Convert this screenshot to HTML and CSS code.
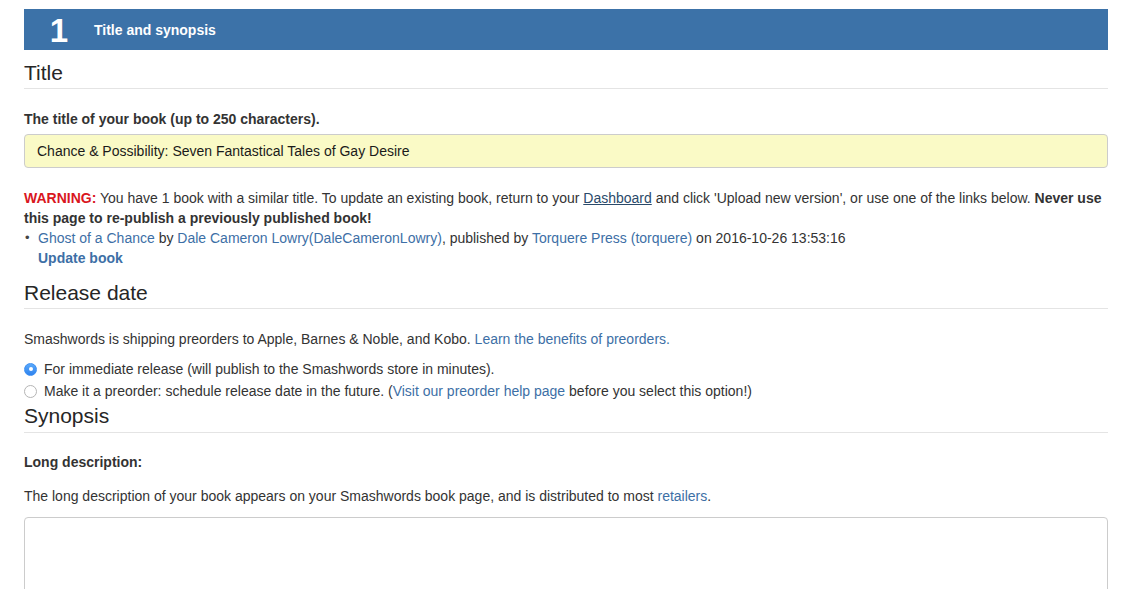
FILE: index.html
```html
<!DOCTYPE html>
<html>
<head>
<meta charset="utf-8">
<link rel="stylesheet" href="styles.css">
</head>
<body>
<div class="page">
  <div class="step-bar">
    <span class="step-num">1</span>
    <span class="step-title">Title and synopsis</span>
  </div>

  <h2 class="section-head">Title</h2>
  <div class="label">The title of your book (up to 250 characters).</div>
  <div class="text-input">Chance &amp; Possibility: Seven Fantastical Tales of Gay Desire</div>

  <div class="warning">
    <p><span class="warn-word">WARNING:</span> You have 1 book with a similar title. To update an existing book, return to your <a class="plain-link" href="#">Dashboard</a> and click 'Upload new version', or use one of the links below. <b>Never use this page to re-publish a previously published book!</b></p>
    <ul class="similar">
      <li><span class="bullet">•</span><div class="item"><div><a href="#">Ghost of a Chance</a> by <a href="#">Dale Cameron Lowry(DaleCameronLowry)</a>, published by <a href="#">Torquere Press (torquere)</a> on 2016-10-26 13:53:16</div><div><a class="strong-link" href="#">Update book</a></div></div></li>
    </ul>
  </div>

  <h2 class="section-head release">Release date</h2>
  <p class="para">Smashwords is shipping preorders to Apple, Barnes &amp; Noble, and Kobo. <a href="#">Learn the benefits of preorders.</a></p>
  <div class="radios">
    <div class="radio-row"><span class="radio checked"></span><span>For immediate release (will publish to the Smashwords store in minutes).</span></div>
    <div class="radio-row"><span class="radio"></span><span>Make it a preorder: schedule release date in the future. (<a href="#">Visit our preorder help page</a> before you select this option!)</span></div>
  </div>

  <h2 class="section-head synopsis">Synopsis</h2>
  <div class="label long">Long description:</div>
  <p class="para desc">The long description of your book appears on your Smashwords book page, and is distributed to most <a href="#">retailers</a>.</p>
  <div class="textarea"></div>
</div>
</body>
</html>
```

FILE: styles.css
```css
html, body {
  margin: 0;
  padding: 0;
  background: #fff;
  height: 100%;
  overflow: hidden;
}
body {
  font-family: "Liberation Sans", Arial, sans-serif;
  font-size: 14px;
  line-height: 20px;
  color: #333;
}
.page {
  width: 1084px;
  margin-left: 24px;
  padding-top: 9px;
}
a {
  color: #3d6fa6;
  text-decoration: none;
}
.step-bar {
  height: 41px;
  background: #3c72a8;
  display: flex;
  align-items: center;
  color: #fff;
}
.step-num {
  width: 70px;
  text-align: center;
  font-size: 33px;
  font-weight: bold;
  line-height: 41px;
  padding-top: 1px;
}
.step-title {
  font-weight: bold;
  font-size: 14px;
}
.section-head {
  margin: 11px 0 0;
  padding-bottom: 3px;
  font-size: 21px;
  line-height: 24px;
  font-weight: normal;
  color: #262626;
  border-bottom: 1px solid #e4e4e4;
}
.label {
  margin-top: 20px;
  font-weight: bold;
}
.text-input {
  margin-top: 5px;
  height: 32px;
  line-height: 32px;
  border: 1px solid #ccc;
  border-radius: 4px;
  background: #fafac6;
  padding-left: 12px;
  color: #1a1a1a;
}
.warning {
  margin-top: 20px;
}
.warning p {
  margin: 0;
}
.warn-word {
  color: #d9161e;
  font-weight: bold;
}
.plain-link {
  color: #2a4a6a;
  text-decoration: underline;
}
.similar {
  list-style: none;
  margin: 0;
  padding: 0;
}
.similar li {
  display: flex;
}
.bullet {
  width: 13px;
  padding-left: 1px;
  color: #444;
  font-size: 13px;
}
.strong-link {
  font-weight: bold;
}
.release {
  margin-top: 13px;
}
.para {
  margin: 20px 0 0;
}
.radios {
  margin-top: 9px;
}
.radio-row {
  display: flex;
  align-items: center;
  height: 22px;
}
.radio {
  width: 11px;
  height: 11px;
  border: 1px solid #b5b5b5;
  border-radius: 50%;
  background: #fff;
  margin-right: 7px;
  display: flex;
  align-items: center;
  justify-content: center;
  flex: none;
}
.radio.checked {
  border-color: #3d8ff2;
  background: linear-gradient(#5aa9fb, #2f83ee);
}
.radio.checked::after {
  content: "";
  width: 4px;
  height: 4px;
  border-radius: 50%;
  background: #fff;
}
.synopsis {
  margin-top: 2px;
  padding-bottom: 4px;
}
.long {
  margin-top: 19px;
}
.desc {
  margin-top: 14px;
}
.textarea {
  margin-top: 11px;
  height: 120px;
  border: 1px solid #ccc;
  border-radius: 4px;
}
```
